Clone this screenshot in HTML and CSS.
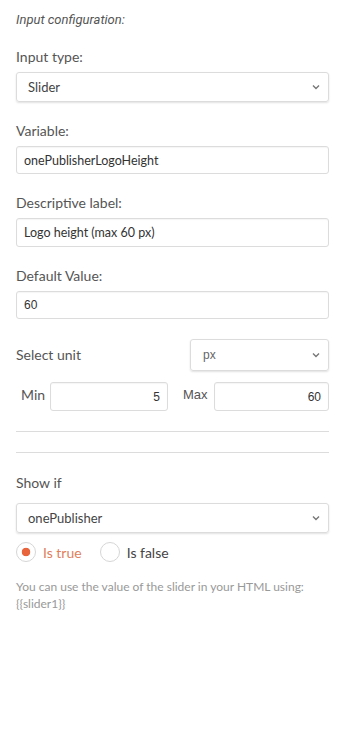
FILE: index.html
```html
<!DOCTYPE html>
<html lang="en">
<head>
    <meta charset="UTF-8">
    <meta name="viewport" content="width=device-width, initial-scale=1.0">
    <title>Input configuration</title>
    <link rel="stylesheet" href="styles.css">
</head>
<body>
    <div class="panel">
        <p class="intro">Input configuration:</p>

        <div class="group">
            <label class="label">Input type:</label>
            <div class="select">
                <span>Slider</span>
                <svg class="chevron" width="8" height="6" viewBox="0 0 8 6"><path d="M1 1.5 L4 4.5 L7 1.5" /></svg>
            </div>
        </div>

        <div class="group">
            <label class="label">Variable:</label>
            <div class="input">onePublisherLogoHeight</div>
        </div>

        <div class="group">
            <label class="label">Descriptive label:</label>
            <div class="input input-tall">Logo height (max 60 px)</div>
        </div>

        <div class="group">
            <label class="label">Default Value:</label>
            <div class="input input-num">60</div>
        </div>

        <div class="unit-row">
            <span class="label">Select unit</span>
            <div class="select select-unit">
                <span>px</span>
                <svg class="chevron" width="8" height="6" viewBox="0 0 8 6"><path d="M1 1.5 L4 4.5 L7 1.5" /></svg>
            </div>
        </div>

        <div class="range-row">
            <div class="range range-min">
                <span class="range-label">Min</span>
                <div class="input input-num input-right">5</div>
            </div>
            <div class="range">
                <span class="range-label range-max">Max</span>
                <div class="input input-num input-right">60</div>
            </div>
        </div>

        <hr class="rule">
        <hr class="rule rule-second">

        <div class="group group-show">
            <label class="label label-show">Show if</label>
            <div class="select">
                <span>onePublisher</span>
                <svg class="chevron" width="8" height="6" viewBox="0 0 8 6"><path d="M1 1.5 L4 4.5 L7 1.5" /></svg>
            </div>
        </div>

        <div class="radios">
            <span class="radio radio-on"><span class="dot"></span>Is true</span>
            <span class="radio"><span class="dot"></span>Is false</span>
        </div>

        <p class="help">You can use the value of the slider in your HTML using:<br>{{slider1}}</p>
    </div>
</body>
</html>
```
FILE: styles.css
```css
* {
    margin: 0;
    padding: 0;
    box-sizing: border-box;
}
body {
    background-color: #fff;
    font-family: Lato, "Liberation Sans", sans-serif;
    color: #555;
}
.panel {
    padding: 11px 14px 0 16px;
}
.intro {
    font-family: Roboto, "Liberation Sans", sans-serif;
    font-style: italic;
    font-size: 13px;
    line-height: 18px;
    color: #555;
    margin-bottom: 19px;
}
.group {
    margin-bottom: 20px;
}
.label {
    display: block;
    font-size: 14px;
    line-height: 18px;
    color: #555;
    margin-bottom: 6px;
}
.select {
    display: flex;
    align-items: center;
    justify-content: space-between;
    height: 30px;
    padding: 0 8px 0 11px;
    border: 1px solid #dcdcdc;
    border-radius: 3px;
    box-shadow: 0 1px 2px rgba(0, 0, 0, 0.12);
    font-size: 13px;
    color: #444;
}
.chevron path {
    fill: none;
    stroke: #777;
    stroke-width: 1.4;
}
.input {
    display: flex;
    align-items: center;
    height: 28px;
    padding: 0 7px;
    border: 1px solid #dcdcdc;
    border-radius: 3px;
    box-shadow: inset 0 1px 1px rgba(0, 0, 0, 0.04);
    font-size: 12.5px;
    color: #333;
}
.input-tall {
    height: 29px;
}
.input-num {
    font-family: "Liberation Sans", Arial, sans-serif;
    font-size: 12px;
}
.input-right {
    flex: 1;
    justify-content: flex-end;
    height: 29px;
}
.unit-row {
    display: flex;
    align-items: center;
    justify-content: space-between;
}
.unit-row .label {
    margin-bottom: 0;
}
.select-unit {
    width: 139px;
    height: 32px;
    padding-left: 12px;
    font-family: "Liberation Sans", Arial, sans-serif;
    font-size: 12px;
    color: #666;
}
.range-row {
    display: flex;
    gap: 10px;
    margin-top: 11px;
}
.range {
    display: flex;
    align-items: center;
    flex: 1;
}
.range-min {
    flex: 0 0 152px;
}
.range-label {
    padding: 0 5px 4px 5px;
    font-size: 14px;
    color: #555;
}
.range-max {
    font-family: "Liberation Sans", Arial, sans-serif;
    font-size: 13px;
    padding-right: 6px;
}
.rule {
    border: 0;
    border-top: 1px solid #dcdcdc;
    margin-top: 20px;
}
.rule-second {
    margin-bottom: 21px;
}
.label-show {
    margin-bottom: 11px;
}
.group-show {
    margin-bottom: 9px;
}
.radios {
    display: flex;
    align-items: center;
}
.radio {
    display: flex;
    align-items: center;
    gap: 7px;
    font-size: 14px;
    color: #444;
}
.radio + .radio {
    margin-left: 18px;
}
.dot {
    width: 20px;
    height: 20px;
    border: 1px solid #d6d6d6;
    border-radius: 50%;
    background-color: #fff;
}
.radio-on {
    color: #e0805c;
}
.radio-on .dot {
    background: radial-gradient(circle, #e8643c 0, #e8643c 4px, #fff 4.6px);
}
.help {
    margin-top: 16px;
    font-size: 12px;
    line-height: 17px;
    color: #999;
}
```
